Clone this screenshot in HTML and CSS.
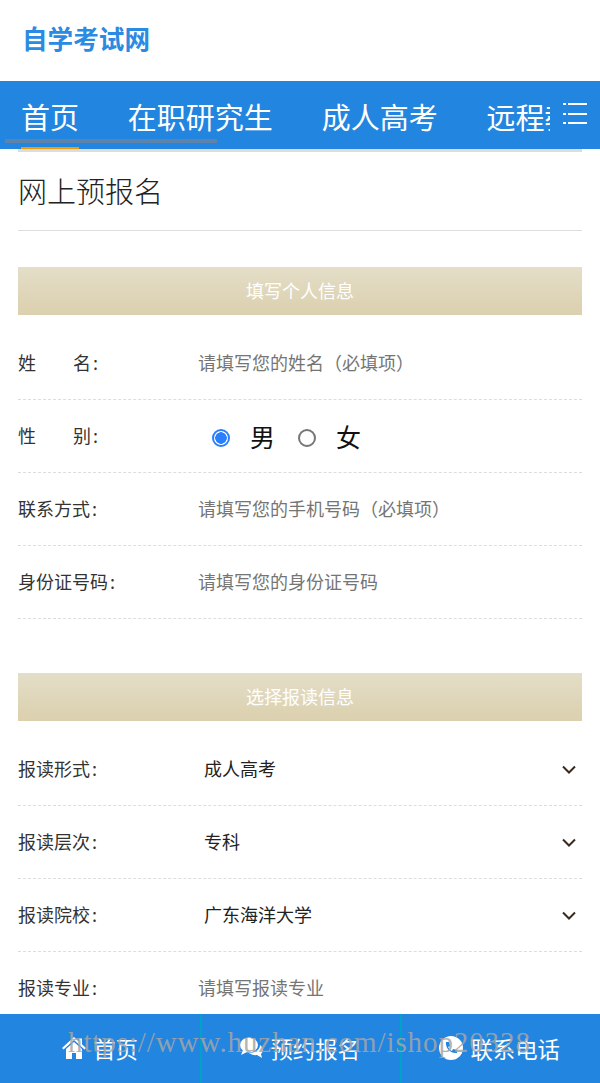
FILE: index.html
```html
<!DOCTYPE html>
<html lang="zh-CN">
<head>
    <meta charset="UTF-8">
    <meta name="viewport" content="width=device-width, initial-scale=1.0">
    <title>网上预报名</title>
    <link rel="stylesheet" href="styles.css">
</head>
<body>

<header class="top">
    <a class="logo">自学考试网</a>
</header>

<nav class="nav">
    <div class="nav-list">
        <a class="nav-item active">首页</a>
        <a class="nav-item">在职研究生</a>
        <a class="nav-item">成人高考</a>
        <a class="nav-item">远程教育</a>
    </div>
    <span class="nav-scroll"></span>
    <div class="nav-menu">
        <svg width="24" height="21" viewBox="0 0 24 21" fill="#fff">
            <rect x="0" y="0" width="3" height="2"/><rect x="5" y="0" width="19" height="2"/>
            <rect x="0" y="10" width="3" height="2"/><rect x="5" y="10" width="19" height="2"/>
            <rect x="0" y="19" width="3" height="2"/><rect x="5" y="19" width="19" height="2"/>
        </svg>
    </div>
</nav>

<main class="main">
    <h1 class="page-title">网上预报名</h1>

    <div class="bar">填写个人信息</div>
    <div class="rows">
        <div class="row">
            <label class="label"><span class="gap">姓</span>名<i class="colon">:</i></label>
            <input class="field" type="text" placeholder="请填写您的姓名（必填项）">
        </div>
        <div class="row">
            <label class="label"><span class="gap">性</span>别<i class="colon">:</i></label>
            <div class="radios">
                <input type="radio" name="sex" checked><span class="radio-text">男</span>
                <input type="radio" name="sex"><span class="radio-text">女</span>
            </div>
        </div>
        <div class="row">
            <label class="label">联系方式<i class="colon">:</i></label>
            <input class="field" type="text" placeholder="请填写您的手机号码（必填项）">
        </div>
        <div class="row">
            <label class="label">身份证号码<i class="colon">:</i></label>
            <input class="field" type="text" placeholder="请填写您的身份证号码">
        </div>
    </div>

    <div class="bar bar-second">选择报读信息</div>
    <div class="rows">
        <div class="row">
            <label class="label">报读形式<i class="colon">:</i></label>
            <div class="select">成人高考
                <svg class="arrow" width="14" height="9" viewBox="0 0 14 9"><path d="M1 1.500l6 6 6-6" fill="none" stroke="#3a2a1e" stroke-width="2"/></svg>
            </div>
        </div>
        <div class="row">
            <label class="label">报读层次<i class="colon">:</i></label>
            <div class="select">专科
                <svg class="arrow" width="14" height="9" viewBox="0 0 14 9"><path d="M1 1.500l6 6 6-6" fill="none" stroke="#3a2a1e" stroke-width="2"/></svg>
            </div>
        </div>
        <div class="row">
            <label class="label">报读院校<i class="colon">:</i></label>
            <div class="select">广东海洋大学
                <svg class="arrow" width="14" height="9" viewBox="0 0 14 9"><path d="M1 1.500l6 6 6-6" fill="none" stroke="#3a2a1e" stroke-width="2"/></svg>
            </div>
        </div>
        <div class="row">
            <label class="label">报读专业<i class="colon">:</i></label>
            <input class="field" type="text" placeholder="请填写报读专业">
        </div>
    </div>
</main>

<footer class="foot">
    <a class="foot-item foot-home">
        <svg width="24" height="22" viewBox="0 0 24 22" fill="#fff"><path d="M12 0L0 11l1.500 1.600L12 3l10.500 9.600L24 11l-4-3.700V1.500h-3v3z"/><path d="M12 5L4 12v10h6v-6h4v6h6V12z"/></svg>
        <span>首页</span>
    </a>
    <a class="foot-item foot-book">
        <svg width="24" height="22" viewBox="0 0 24 22" fill="#fff"><ellipse cx="9" cy="8" rx="9" ry="7.500"/><path d="M3 13l-2 5 6-3z"/><path d="M20 8c3 2 4 6 1 9l1 4-5-3c-3 .5-6-.5-8-2 6 0 11-3 11-8z"/></svg>
        <span>预约报名</span>
    </a>
    <a class="foot-item foot-tel">
        <svg width="24" height="24" viewBox="0 0 24 24"><circle cx="12" cy="12" r="12" fill="#fff"/><path d="M7 6l3 0 1 4-2 1c1 2 2 3 4 4l1-2 4 1v3c-6 1-12-5-11-11z" fill="#2285e0"/></svg>
        <span>联系电话</span>
    </a>
    <div class="watermark">https://www.huzhan.com/ishop20328</div>
</footer>

</body>
</html>
```
FILE: styles.css
```css
* {
    box-sizing: border-box;
}
html, body {
    height: 1083px;
    overflow: hidden;
}
body {
    margin: 0;
    font-family: "Noto Sans CJK SC", "Liberation Sans", sans-serif;
    color: #333;
    background-color: #fff;
    position: relative;
}
.top {
    height: 81px;
    padding-left: 22px;
    padding-bottom: 6px;
    display: flex;
    align-items: center;
}
.logo {
    font-size: 25.600px;
    font-weight: bold;
    color: #2b8ae2;
}
.nav {
    height: 68px;
    background-color: #2285e0;
    position: relative;
    overflow: hidden;
}
.nav-list {
    width: 550px;
    height: 68px;
    padding-left: 21px;
    display: flex;
    gap: 48.800px;
    overflow: hidden;
    white-space: nowrap;
}
.nav-item {
    flex: none;
    height: 68px;
    line-height: 70px;
    font-size: 29px;
    color: #fff;
}
.nav-item.active {
    border-bottom: 2px solid #f59a00;
}
.nav-scroll {
    position: absolute;
    left: 5px;
    top: 58px;
    width: 212px;
    height: 4px;
    background-color: #5c83ab;
}
.nav-menu {
    position: absolute;
    right: 13px;
    top: 22px;
    line-height: 0;
}
.main {
    padding: 0 18px;
}
.page-title {
    margin: 0;
    height: 82px;
    line-height: 76px;
    font-size: 29px;
    font-weight: 300;
    color: #222;
    border-top: 3px solid #ddd;
    border-bottom: 1px solid #ddd;
}
.bar {
    margin-top: 36px;
    height: 48px;
    line-height: 46px;
    text-align: center;
    font-size: 18px;
    color: #fff;
    background: linear-gradient(#e4dec8, #dbd0ae);
}
.bar-second {
    margin-top: 54px;
}
.rows {
    padding-top: 12px;
}
.row {
    height: 73px;
    padding-bottom: 2px;
    display: flex;
    align-items: center;
    border-bottom: 1px dashed #ddd;
}
.label {
    flex: none;
    width: 181px;
    font-size: 18px;
    color: #333;
}
.label .gap {
    display: inline-block;
    width: 55px;
}
.colon {
    font-style: normal;
    margin-left: 2px;
}
.field {
    flex: 1;
    min-width: 0;
    border: none;
    outline: none;
    padding: 0;
    margin-left: -1px;
    font-family: inherit;
    font-size: 18px;
    color: #333;
    background: transparent;
}
.field::placeholder {
    color: #757575;
    opacity: 1;
}
.radios {
    display: flex;
    align-items: center;
    margin-top: 2px;
    padding-left: 13px;
    font-size: 25px;
    color: #111;
}
.radios input {
    appearance: none;
    flex: none;
    width: 18px;
    height: 18px;
    margin: 4px 0 0;
    border: 2px solid #767676;
    border-radius: 50%;
    background-color: #fff;
}
.radios input:checked {
    border-color: #2a7fff;
    background: radial-gradient(circle, #2a7fff 0 5.500px, #fff 6px);
}
.radio-text {
    margin-left: 20px;
    margin-right: 23px;
}
.select {
    flex: 1;
    padding-left: 5px;
    padding-right: 6px;
    display: flex;
    justify-content: space-between;
    align-items: center;
    font-size: 18px;
    color: #222;
}
.arrow {
    margin-top: 2px;
}
.foot {
    position: absolute;
    left: 0;
    bottom: 0;
    width: 600px;
    height: 69px;
    background-color: #2285e0;
    display: grid;
    grid-template-columns: 202px 200px 198px;
}
.foot-item {
    display: flex;
    justify-content: flex-end;
    align-items: center;
    gap: 7px;
    padding-bottom: 2px;
    padding-right: 40px;
    font-size: 22.400px;
    color: #fff;
    border-right: 2px solid #00a3c7;
}
.foot-home {
    padding-right: 62px;
}
.foot-book {
    gap: 6px;
}
.foot-tel {
    border-right: none;
}
.watermark {
    position: absolute;
    left: 68px;
    top: 12px;
    font-family: "Liberation Serif", serif;
    font-size: 29px;
    letter-spacing: 0.900px;
    color: rgba(165, 165, 165, 0.85);
    white-space: nowrap;
}
```
